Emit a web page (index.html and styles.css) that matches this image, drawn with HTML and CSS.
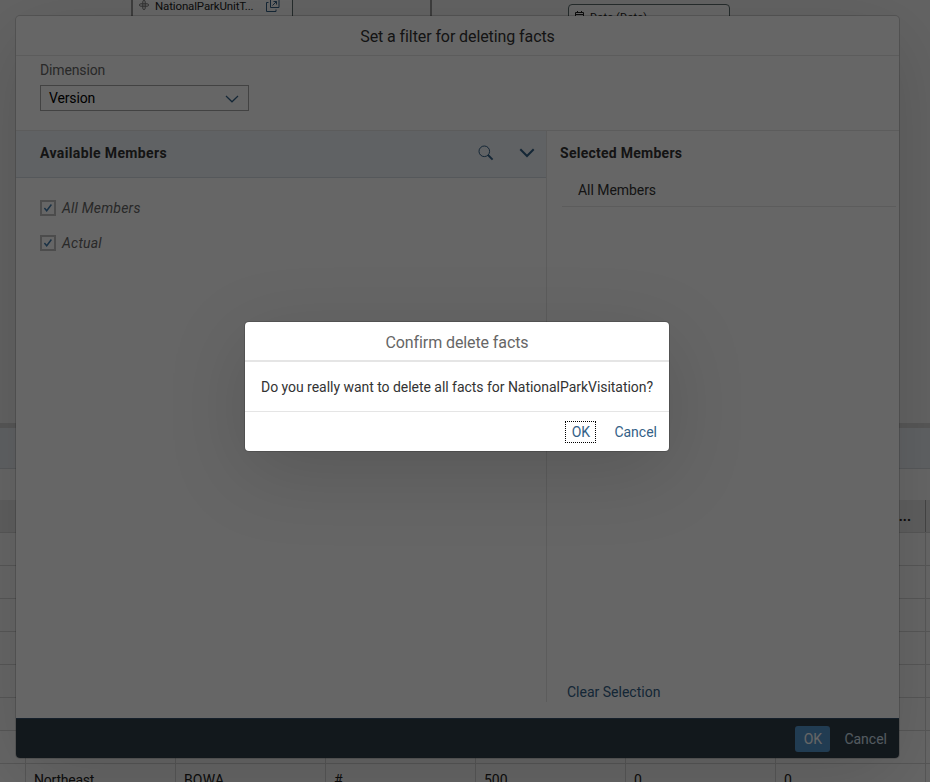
FILE: index.html
```
<!DOCTYPE html>
<html lang="en">
<head>
<meta charset="utf-8">
<title>Delete facts</title>
<link rel="stylesheet" href="styles.css">
</head>
<body>
<div class="workspace">
  <section class="canvas">
    <div class="node node-park">
      <svg class="dim-icon" width="10" height="10" viewBox="0 0 10 10" fill="none" stroke="currentColor"><path d="M3.800 3.800V1.700a1.200 1.200 0 0 1 2.400 0v6.600a1.200 1.200 0 0 1-2.400 0zM3.800 3.800H1.700a1.200 1.200 0 0 0 0 2.400h6.600a1.200 1.200 0 0 0 0-2.400z"/></svg>
      <span class="node-name">NationalParkUnitT...</span>
      <svg class="open-icon" width="14" height="14" viewBox="0 0 14 14" fill="none" stroke="currentColor"><path d="M4.500 1.500h8.500v8H4.500zM2.500 4.500h-2v9h9.500v-2M6.500 7.500l4-4M7.500 3.500h3v3"/></svg>
    </div>
    <div class="node-edge"></div>
    <div class="node node-date">
      <svg width="9" height="10" viewBox="0 0 9 10" fill="none" stroke="currentColor"><path d="M.5 1.500h8v8h-8zM.5 3.500h8M2.500 0v2M6.500 0v2"/></svg>
      <span>Date (Date)</span>
    </div>
  </section>
  <div class="splitter"></div>
  <div class="toolbar"></div>
  <div class="strip"></div>
  <div class="grid">
    <div class="row head"><i></i><b></b><b></b><b></b><b></b><b></b><b class="more">...</b><i class="end"></i></div>
    <div class="row"><i></i><b></b><b></b><b></b><b></b><b></b><b></b><i class="end"></i></div>
    <div class="row"><i></i><b></b><b></b><b></b><b></b><b></b><b></b><i class="end"></i></div>
    <div class="row"><i></i><b></b><b></b><b></b><b></b><b></b><b></b><i class="end"></i></div>
    <div class="row"><i></i><b></b><b></b><b></b><b></b><b></b><b></b><i class="end"></i></div>
    <div class="row"><i></i><b></b><b></b><b></b><b></b><b></b><b></b><i class="end"></i></div>
    <div class="row"><i></i><b></b><b></b><b></b><b></b><b></b><b></b><i class="end"></i></div>
    <div class="row"><i></i><b></b><b></b><b></b><b></b><b></b><b></b><i class="end"></i></div>
    <div class="row"><i></i><b class="region">Northeast</b><b class="code">BOWA</b><b>#</b><b>500</b><b>0</b><b>0</b><i class="end"></i></div>
  </div>
</div>

<div class="dialog filter">
  <header class="filter-title">Set a filter for deleting facts</header>
  <div class="dimension">
    <label>Dimension</label>
    <div class="select"><span>Version</span>
      <svg width="14" height="8" viewBox="0 0 14 8" fill="none" stroke="currentColor" stroke-width="1.200"><path d="M1 1l6 5.800L13 1"/></svg>
    </div>
  </div>
  <div class="panels">
    <section class="available">
      <div class="panel-head"><h2>Available Members</h2>
        <svg class="search" width="16" height="16" viewBox="0 0 16 16" fill="none" stroke="currentColor"><circle cx="6.300" cy="6.300" r="5.300" stroke-width="1"/><path d="M10 10l4.600 4.600" stroke-width="1.900"/></svg>
        <svg width="16" height="10" viewBox="0 0 16 10" fill="none" stroke="currentColor" stroke-width="2"><path d="M1.300 1.300L8 8l6.700-6.700"/></svg>
      </div>
      <ul class="members">
        <li><span class="check"><svg width="10" height="10" viewBox="0 0 10 10" fill="none" stroke="currentColor" stroke-width="1.500"><path d="M1.400 5l2.300 2.700L8.400 1.500"/></svg></span><em>All Members</em></li>
        <li><span class="check"><svg width="10" height="10" viewBox="0 0 10 10" fill="none" stroke="currentColor" stroke-width="1.500"><path d="M1.400 5l2.300 2.700L8.400 1.500"/></svg></span><em>Actual</em></li>
      </ul>
    </section>
    <section class="selected">
      <h2>Selected Members</h2>
      <div class="picked">All Members</div>
      <a class="clear">Clear Selection</a>
    </section>
  </div>
  <footer class="filter-actions"><button class="primary">OK</button><button>Cancel</button></footer>
</div>

<div class="backdrop"></div>

<div class="dialog confirm">
  <header>Confirm delete facts</header>
  <p>Do you really want to delete all facts for NationalParkVisitation?</p>
  <footer><button class="focused">OK</button><button>Cancel</button></footer>
</div>
</body>
</html>
```

FILE: styles.css
```
* { box-sizing: border-box; }
body { margin: 0; width: 930px; height: 782px; overflow: hidden; position: relative; font: 14px/18px Roboto, "Liberation Sans", sans-serif; color: #333; background: #fff; }
h2, p, ul { margin: 0; padding: 0; }
h2 { font-size: 14px; line-height: 18px; font-weight: 700; letter-spacing: .26px; }
svg { display: block; flex: none; }
button { border: 0; background: none; padding: 0; font: inherit; color: #346187; }

.canvas { position: relative; height: 423px; background: #f7f7f7; }
.node { position: absolute; display: flex; background: #fff; border: 1px solid #5d6e6e; font-size: 12px; color: #222; }
.node-park { left: 131px; top: -12px; width: 162px; height: 60px; border-left: 2px solid #999; align-items: flex-start; padding: 11px 0 0 6px; }
.node-name { margin: -1px 0 0 6px; line-height: 14px; font-size: 11.5px; letter-spacing: -.14px; }
.dim-icon { color: #777; }
.open-icon { position: absolute; left: 133px; top: 9px; color: #346187; }
.node-edge { position: absolute; left: 430px; top: 0; width: 2px; height: 30px; background: #999; }
.node-date { left: 568px; top: 4px; width: 162px; height: 50px; border-radius: 4px; padding: 6px; gap: 6px; font-size: 11px; letter-spacing: .15px; line-height: 14px; }
.splitter { height: 5px; background: #d9d9d9; }
.toolbar { height: 41px; background: #eff4f9; border-bottom: 1px solid #d9dde2; }
.strip { height: 31px; }
.row { display: grid; grid-template-columns: 26px repeat(6, 150px) 4px; height: 33px; border-bottom: 1px solid #d9d9d9; line-height: 32px; color: #222; }
.row i, .row b { border-right: 1px solid #d9d9d9; font-weight: 400; padding-left: 8px; }
.row .end { border: 0; padding: 0; }
.head { background: #ececec; }
.head b { border-color: #aaa; }
.head .more { text-align: right; padding-right: 14px; font-weight: 700; }
.region { letter-spacing: -.22px; }
.code { letter-spacing: .15px; }

.dialog { position: absolute; background: #fff; border-radius: 4px; overflow: hidden; box-shadow: 0 0 0 1px rgba(0,0,0,.15), 0 20px 80px 0 rgba(0,0,0,.15); display: flex; flex-direction: column; }
.filter { left: 16px; top: 16px; width: 883px; height: 742px; }
.filter-title { height: 40px; border-bottom: 1px solid #e5e5e5; text-align: center; font-size: 16px; line-height: 41px; flex: none; letter-spacing: -.09px; }
.dimension { height: 74px; padding: 5px 24px 0; flex: none; color: #666; letter-spacing: -.14px; }
.select { margin-top: 6px; width: 209px; height: 26px; border: 1px solid #a6a6a6; display: flex; justify-content: space-between; align-items: center; padding: 0 9px 0 8px; color: #000; }
.select svg { color: #346187; margin-top: 2px; }
.panels { flex: 1; display: grid; grid-template-columns: 530px 1fr; border-top: 1px solid #e5e5e5; padding-bottom: 16px; min-height: 0; }
.panel-head { height: 47px; background: #eff4f9; border-bottom: 1px solid #d4dbe3; display: flex; align-items: center; padding: 0 11px 2px 24px; }
.panel-head h2 { flex: 1; letter-spacing: .37px; }
.panel-head svg { color: #346187; }
.panel-head .search { margin-right: 25px; }
.members { list-style: none; padding: 12px 24px; }
.members li { display: flex; align-items: center; height: 35px; gap: 6px; color: #666; letter-spacing: .21px; }
.check { width: 16px; height: 16px; border: 2px solid #bfbfbf; color: #427cac; display: flex; align-items: center; justify-content: center; }
.selected { border-left: 1px solid #e5e5e5; padding: 13px 3px 0 13px; display: flex; flex-direction: column; }
.picked { margin: 10px 0 0 2px; height: 35px; border-bottom: 1px solid #e5e5e5; padding-left: 16px; line-height: 36px; letter-spacing: -.05px; }
.clear { margin: auto 0 1px 7px; color: #346187; }
.filter-actions { height: 40px; flex: none; background: #2f3c48; border-top: 1px solid #354f69; display: flex; justify-content: flex-end; align-items: center; padding-right: 12px; gap: 14px; }
.filter-actions button { color: #d1e0ee; height: 26px; }
.filter-actions .primary { width: 35px; border-radius: 3px; background: #5496cd; color: #fff; }

.backdrop { position: absolute; inset: 0; background: rgba(0,0,0,.6); }

.confirm { left: 245px; top: 322px; width: 424px; height: 129px; }
.confirm header { height: 40px; border-bottom: 2px solid #e5e5e5; text-align: center; font-size: 16px; line-height: 41px; color: #666; letter-spacing: -.1px; }
.confirm p { height: 49px; padding-left: 16px; line-height: 50px; white-space: nowrap; letter-spacing: -.035px; }
.confirm footer { height: 40px; border-top: 1px solid #e5e5e5; display: flex; justify-content: flex-end; align-items: center; padding: 0 12px 0 0; gap: 18px; }
.focused { width: 31px; height: 22px; outline: 1px dotted #000; outline-offset: -1px; }
```
